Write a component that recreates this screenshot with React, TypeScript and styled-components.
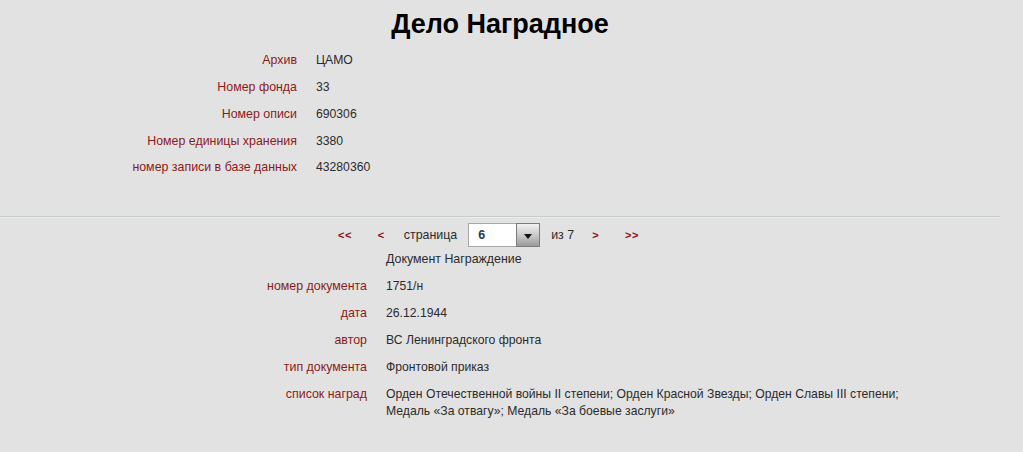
import React from "react";
import styled, { createGlobalStyle } from "styled-components";

const GlobalStyle = createGlobalStyle`
	html, body {
		margin: 0;
		padding: 0;
		background: #e2e2e2;
	}
	body {
		font-family: "Liberation Sans", Arial, sans-serif;
		font-size: 12.4px;
		color: #2b2b2b;
	}
`;

const Page = styled.div`
	width: 1000px;
	min-height: 452px;
`;

const Title = styled.h1`
	margin: 0;
	padding-top: 9px;
	height: 37px;
	line-height: 30px;
	font-size: 27px;
	font-weight: bold;
	color: #000;
	text-align: center;
`;

const InfoGrid = styled.div<{ $labelWidth: number; $valueWidth: number; $rowHeight: number }>`
	display: grid;
	grid-template-columns: ${(p) => p.$labelWidth}px ${(p) => p.$valueWidth}px;
	grid-auto-rows: auto;
	column-gap: 19px;

	& > div {
		padding: ${(p) => (p.$rowHeight - 17) / 2}px 0;
		line-height: 17px;
	}
`;

const Label = styled.div`
	text-align: right;
	color: #8b1a1a;
`;

const Value = styled.div`
	color: #2b2b2b;
	font-size: 12.2px;
`;

const TopSection = styled.section`
	padding-top: 1.5px;
	padding-bottom: 35px;
`;

const Divider = styled.hr`
	margin: 0;
	width: 1000px;
	height: 0;
	border: none;
	border-top: 1px solid #c4cdc9;
	border-bottom: 1px solid #ececec;
`;

const Pager = styled.nav`
	display: flex;
	align-items: center;
	height: 26px;
	margin-top: 4px;
	padding-left: 338px;
`;

const PagerItem = styled.span<{ $gap: number }>`
	margin-left: ${(p) => p.$gap}px;
`;

const ArrowLink = styled.a<{ $gap: number }>`
	margin-left: ${(p) => p.$gap}px;
	color: #8b1010;
	font-weight: bold;
	font-size: 11px;
	text-decoration: none;
	letter-spacing: 0.5px;
`;

const PageSelect = styled.div<{ $gap: number }>`
	margin-left: ${(p) => p.$gap}px;
	display: flex;
	height: 24px;
`;

const PageInput = styled.div`
	width: 38px;
	height: 22px;
	padding-left: 9px;
	line-height: 22px;
	background: #fff;
	border: 1px solid #a8a8a8;
	border-right: none;
	font-weight: bold;
	color: #1d3a4a;
`;

const PageButton = styled.div`
	width: 22px;
	height: 22px;
	display: flex;
	align-items: center;
	justify-content: center;
	border: 1px solid #7c7c7c;
	background: linear-gradient(#f2f2f2, #c6c6c6 55%, #9a9a9a);
`;

const DownTriangle = styled.span`
	width: 0;
	height: 0;
	margin-top: 2px;
	border-left: 4px solid transparent;
	border-right: 4px solid transparent;
	border-top: 5px solid #111;
`;

const DocSection = styled.section`
	margin-top: 2.5px;
`;

const DocTitleRow = styled.div`
	line-height: 17px;
	padding-left: 386px;
	padding-bottom: 5px;
	color: #2b2b2b;
`;

const topRows: [string, string][] = [
	["Архив", "ЦАМО"],
	["Номер фонда", "33"],
	["Номер описи", "690306"],
	["Номер единицы хранения", "3380"],
	["номер записи в базе данных", "43280360"],
];

const docRows: [string, string][] = [
	["номер документа", "1751/н"],
	["дата", "26.12.1944"],
	["автор", "ВС Ленинградского фронта"],
	["тип документа", "Фронтовой приказ"],
	[
		"список наград",
		"Орден Отечественной войны II степени; Орден Красной Звезды; Орден Славы III степени; Медаль «За отвагу»; Медаль «За боевые заслуги»",
	],
];

export default function App() {
	return (
		<>
			<GlobalStyle />
			<Page>
				<Title>Дело Наградное</Title>
				<TopSection>
					<InfoGrid $labelWidth={297} $valueWidth={300} $rowHeight={26.75}>
						{topRows.map(([label, value]) => (
							<React.Fragment key={label}>
								<Label>{label}</Label>
								<Value>{value}</Value>
							</React.Fragment>
						))}
					</InfoGrid>
				</TopSection>
				<Divider />
				<Pager>
					<ArrowLink href="#" $gap={0}>&lt;&lt;</ArrowLink>
					<ArrowLink href="#" $gap={26}>&lt;</ArrowLink>
					<PagerItem $gap={19}>страница</PagerItem>
					<PageSelect $gap={11}>
						<PageInput>6</PageInput>
						<PageButton>
							<DownTriangle />
						</PageButton>
					</PageSelect>
					<PagerItem $gap={11}>из 7</PagerItem>
					<ArrowLink href="#" $gap={18}>&gt;</ArrowLink>
					<ArrowLink href="#" $gap={26}>&gt;&gt;</ArrowLink>
				</Pager>
				<DocSection>
					<DocTitleRow>Документ Награждение</DocTitleRow>
					<InfoGrid $labelWidth={367} $valueWidth={525} $rowHeight={27}>
						{docRows.map(([label, value]) => (
							<React.Fragment key={label}>
								<Label>{label}</Label>
								<Value>{value}</Value>
							</React.Fragment>
						))}
					</InfoGrid>
				</DocSection>
			</Page>
		</>
	);
}
